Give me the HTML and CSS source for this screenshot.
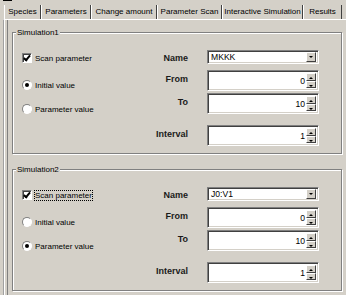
FILE: index.html
```html
<!DOCTYPE html>
<html lang="en">
<head>
    <meta charset="UTF-8">
    <title>Parameter Scan</title>
    <link rel="stylesheet" href="styles.css">
</head>
<body>
    <div class="topbar"><span class="mark"></span></div>

    <div class="tabs">
        <div class="tab t1">Species</div>
        <div class="tab t2">Parameters</div>
        <div class="tab t3">Change amount</div>
        <div class="tab t4 active">Parameter Scan</div>
        <div class="tab t5">Interactive Simulation</div>
        <div class="tab t6">Results</div>
    </div>

    <div class="panel">
        <div class="group">
            <div class="legend">Simulation1</div>
            <div class="group-body">
                <div class="options">
                    <div class="opt"><span class="check on"></span><span>Scan parameter</span></div>
                    <div class="opt"><span class="radio on"></span><span>Initial value</span></div>
                    <div class="opt"><span class="radio"></span><span>Parameter value</span></div>
                </div>
                <div class="fields">
                    <div class="lbl">Name</div>
                    <div class="combo"><span class="val">MKKK</span><span class="drop"></span></div>
                    <div class="lbl">From</div>
                    <div class="spin"><span class="num">0</span><span class="arrows"><span class="up"></span><span class="down"></span></span></div>
                    <div class="lbl">To</div>
                    <div class="spin"><span class="num">10</span><span class="arrows"><span class="up"></span><span class="down"></span></span></div>
                    <div class="lbl gap">Interval</div>
                    <div class="spin gap"><span class="num">1</span><span class="arrows"><span class="up"></span><span class="down"></span></span></div>
                </div>
            </div>
        </div>

        <div class="group">
            <div class="legend">Simulation2</div>
            <div class="group-body">
                <div class="options">
                    <div class="opt"><span class="check on"></span><span class="focus">Scan parameter</span></div>
                    <div class="opt"><span class="radio"></span><span>Initial value</span></div>
                    <div class="opt"><span class="radio on"></span><span>Parameter value</span></div>
                </div>
                <div class="fields">
                    <div class="lbl">Name</div>
                    <div class="combo"><span class="val">J0:V1</span><span class="drop"></span></div>
                    <div class="lbl">From</div>
                    <div class="spin"><span class="num">0</span><span class="arrows"><span class="up"></span><span class="down"></span></span></div>
                    <div class="lbl">To</div>
                    <div class="spin"><span class="num">10</span><span class="arrows"><span class="up"></span><span class="down"></span></span></div>
                    <div class="lbl gap">Interval</div>
                    <div class="spin gap"><span class="num">1</span><span class="arrows"><span class="up"></span><span class="down"></span></span></div>
                </div>
            </div>
        </div>
    </div>
</body>
</html>
```

FILE: styles.css
```css
:root {
    --face: #d4d0c8;
    --shadow: #808080;
    --dark: #404040;
}

body {
    margin: 0;
    width: 346px;
    height: 295px;
    overflow: hidden;
    background: var(--face);
    font-family: "Liberation Sans", Arial, sans-serif;
    font-size: 8px;
    color: #000;
}

.topbar {
    height: 5px;
}

.mark {
    display: block;
    margin-left: 3px;
    width: 9px;
    height: 2px;
    border-top: 1px solid #000;
}

.tabs {
    display: flex;
    height: 14px;
    padding-left: 4px;
}

.tab {
    box-sizing: border-box;
    line-height: 14px;
    text-align: center;
    border-left: 1px solid #fff;
    border-right: 1px solid var(--dark);
    white-space: nowrap;
}

.t1 { width: 37px; }
.t2 { width: 50px; }
.t3 { width: 66px; }
.t4 { width: 65px; }
.t5 { width: 81px; }
.t6 { width: 39px; }

.panel {
    margin-left: 3px;
    border-top: 1px solid #fff;
    border-left: 1px solid #a0a0a0;
    box-shadow: inset 1px 0 0 #fff, inset 3px 0 0 var(--face), inset 4px 0 0 var(--shadow);
    padding: 12px 4px 0 8px;
    height: 270px;
}

.group {
    position: relative;
    border: 1px solid var(--shadow);
    box-shadow: 1px 1px 0 #fff, inset 1px 1px 0 #fff;
    height: 120px;
    margin-bottom: 15px;
}

.legend {
    position: absolute;
    top: -6px;
    left: 3px;
    padding: 0 1px;
    background: var(--face);
    line-height: 11px;
}

.group-body {
    display: flex;
    padding: 17px 0 0 9px;
}

.options {
    width: 124px;
    padding-top: 3px;
}

.opt {
    display: flex;
    align-items: center;
    gap: 3px;
    height: 10px;
    margin-bottom: 17px;
}

.opt:nth-child(3) {
    margin-top: -3px;
}

.check {
    box-sizing: border-box;
    width: 10px;
    height: 10px;
    background: #fff;
    border: 1px solid var(--shadow);
    border-right-color: #fff;
    border-bottom-color: #fff;
    box-shadow: inset 1px 1px 0 var(--dark);
    position: relative;
}

.check.on::after {
    content: "";
    position: absolute;
    left: 2px;
    top: 0px;
    width: 2px;
    height: 5px;
    border: solid #000;
    border-width: 0 2px 2px 0;
    transform: rotate(40deg);
}

.radio {
    box-sizing: border-box;
    width: 10px;
    height: 10px;
    border-radius: 50%;
    background: #fff;
    border: 1px solid var(--shadow);
    border-right-color: #fff;
    border-bottom-color: #fff;
    position: relative;
}

.radio.on::after {
    content: "";
    position: absolute;
    left: 2px;
    top: 2px;
    width: 4px;
    height: 4px;
    border-radius: 50%;
    background: #000;
}

.focus {
    outline: 1px dotted #000;
    outline-offset: 0;
}

.fields {
    display: grid;
    grid-template-columns: 42px 112px;
    column-gap: 19px;
    row-gap: 2px;
    align-items: center;
}

.lbl {
    text-align: right;
    font-size: 9px;
    font-weight: bold;
    color: #1a1a1a;
    margin-top: -3px;
}

.gap {
    margin-top: 9px;
}

.lbl.gap {
    margin-top: 6px;
}

.combo,
.spin {
    box-sizing: border-box;
    display: flex;
    align-items: center;
    background: #fff;
    border: 1px solid var(--shadow);
    border-right-color: #fff;
    border-bottom-color: #fff;
    box-shadow: inset 1px 1px 0 var(--dark), inset -1px -1px 0 var(--face);
    padding: 2px 2px 2px 3px;
    font-size: 8.6px;
}

.combo {
    height: 14px;
    margin-bottom: 4px;
}

.spin {
    height: 21px;
}

.val {
    flex: 1;
}

.num {
    flex: 1;
    text-align: right;
    padding-right: 1px;
}

.drop,
.up,
.down {
    box-sizing: border-box;
    position: relative;
    display: block;
    width: 10px;
    background: var(--face);
    border: 1px solid #fff;
    border-right-color: var(--dark);
    border-bottom-color: var(--dark);
}

.drop {
    height: 10px;
}

.arrows {
    display: flex;
    flex-direction: column;
    align-self: stretch;
}

.up,
.down {
    flex: 1;
}

.drop::after,
.down::after,
.up::after {
    content: "";
    position: absolute;
    left: 2px;
    top: 3px;
    border: 2px solid transparent;
    border-top: 2px solid #000;
    border-bottom: 0;
}

.up::after {
    border-top: 0;
    border-bottom: 2px solid #000;
}
```
